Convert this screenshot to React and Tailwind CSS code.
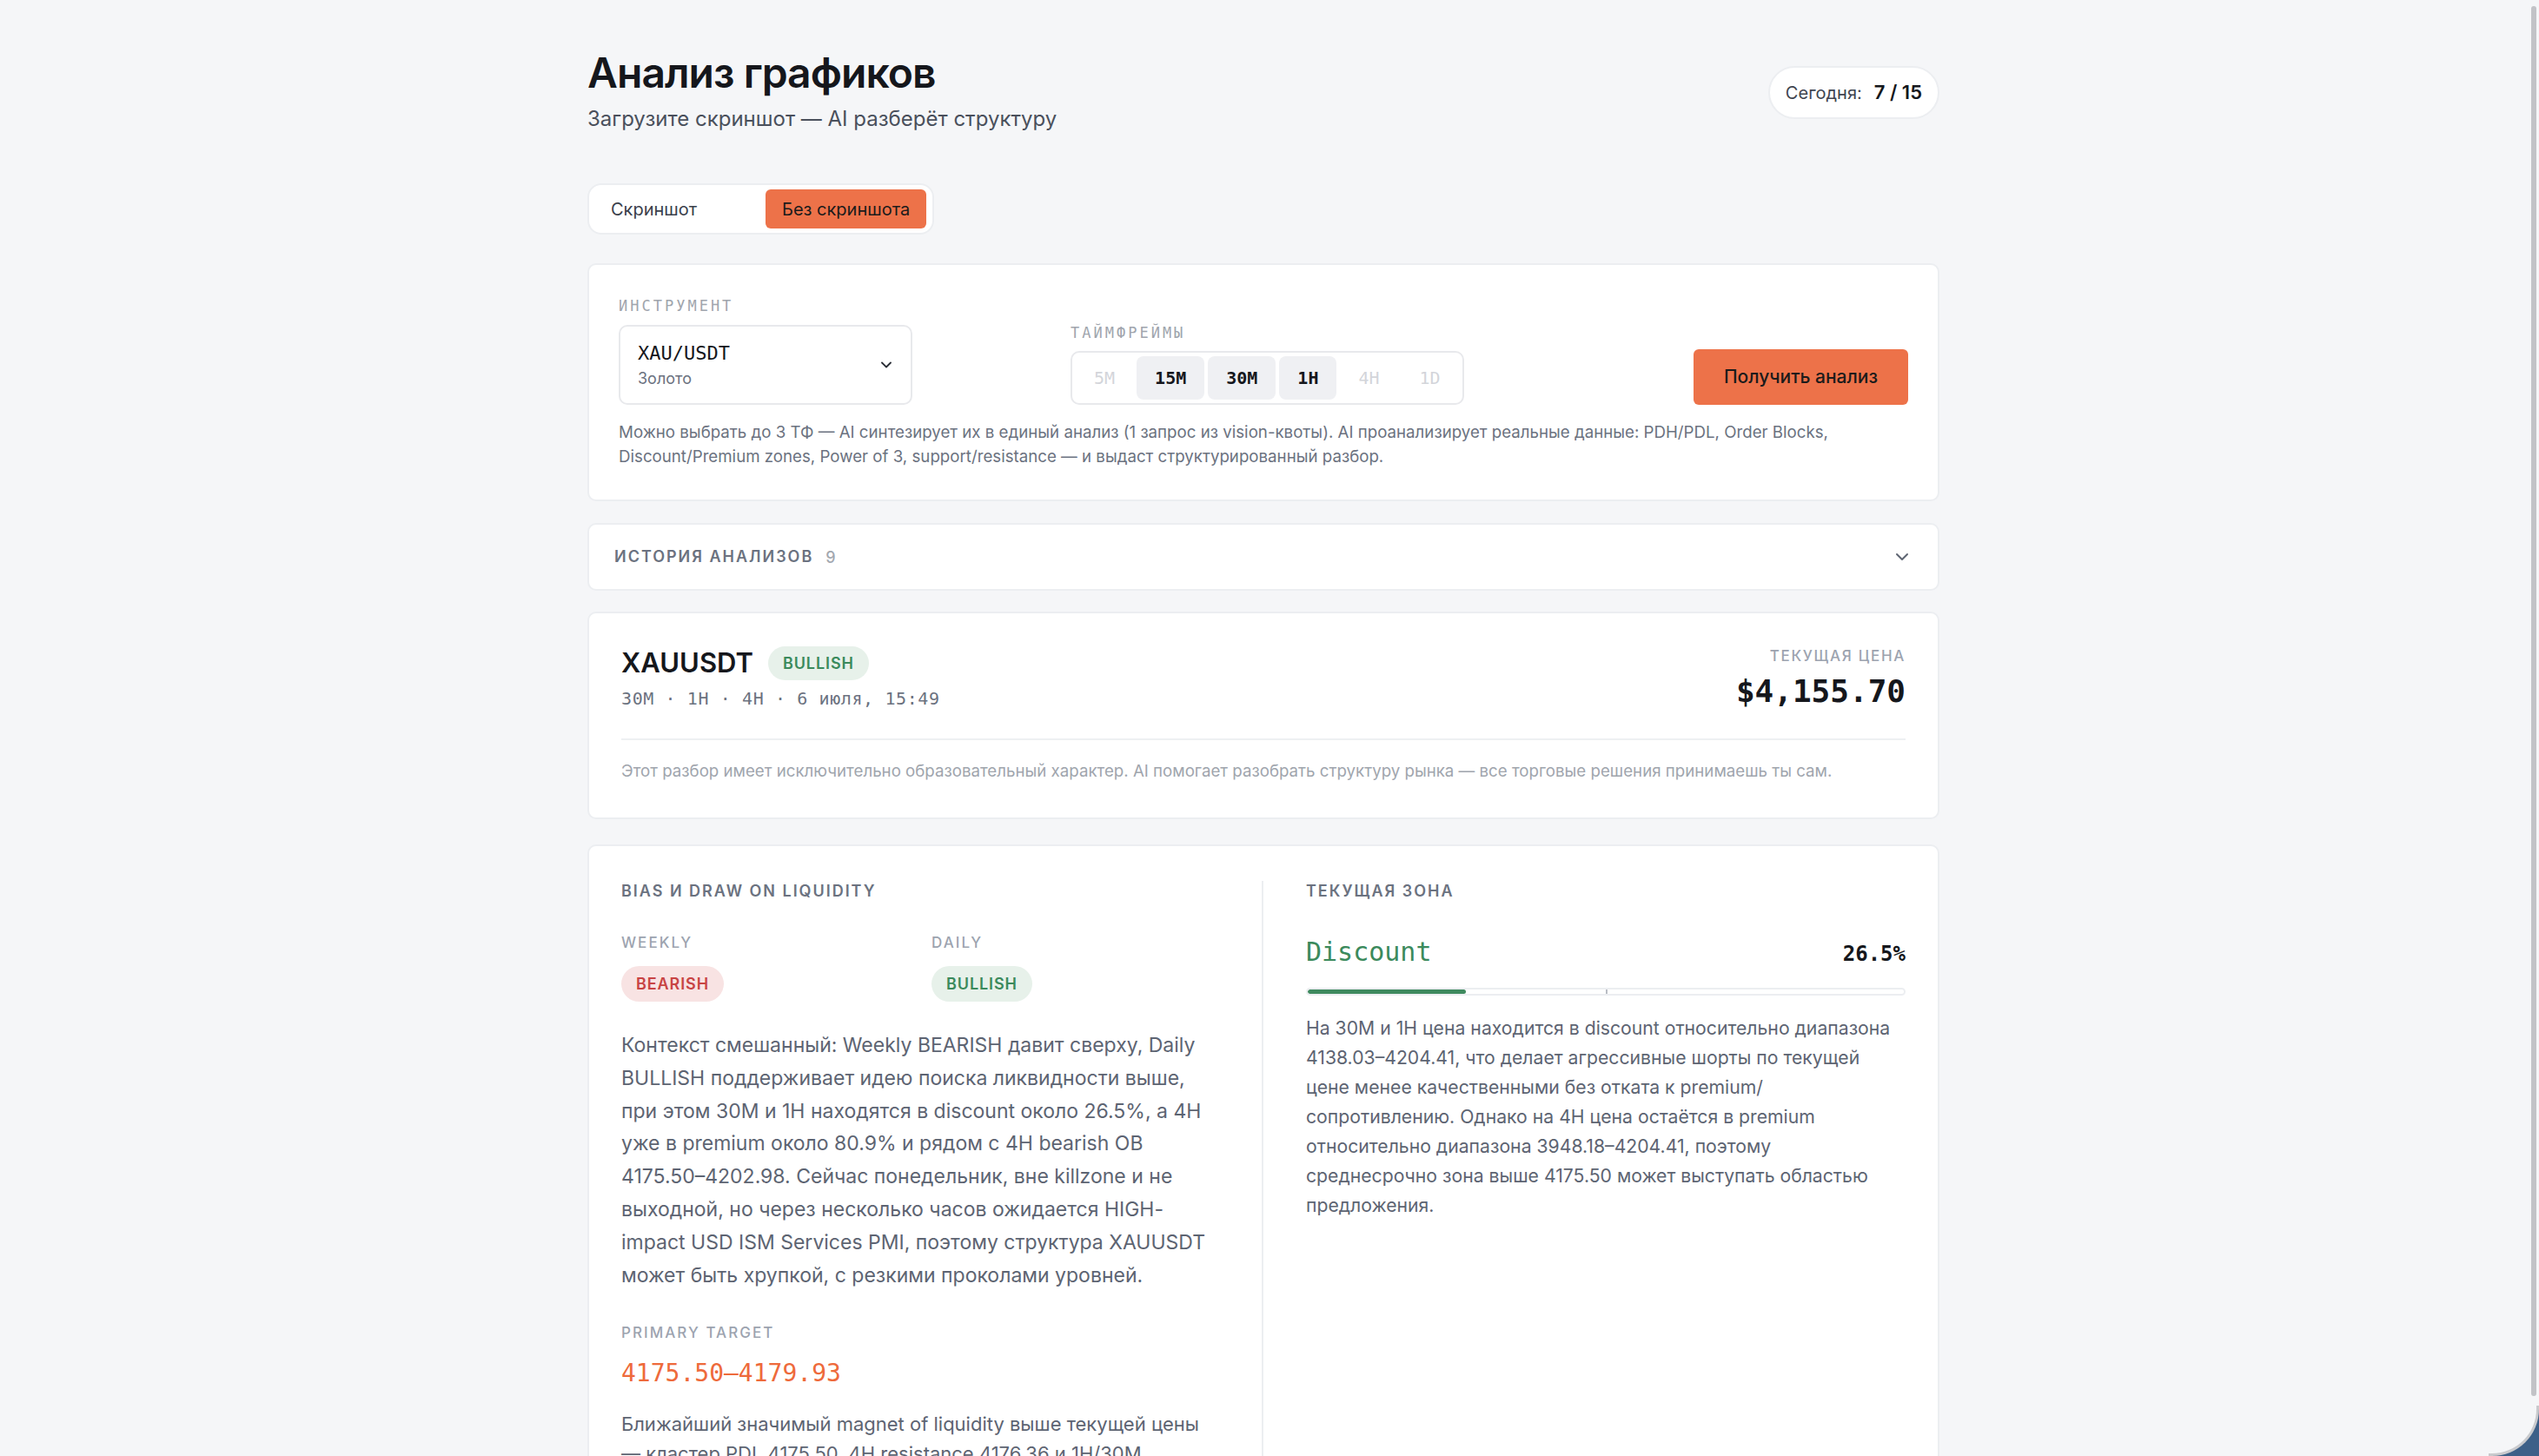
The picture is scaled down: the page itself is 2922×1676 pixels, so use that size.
import React from 'react';
import { ChevronDown } from 'lucide-react';

const frames = [
  { id: '5M', on: false },
  { id: '15M', on: true },
  { id: '30M', on: true },
  { id: '1H', on: true },
  { id: '4H', on: false },
  { id: '1D', on: false },
];

function MonoLabel({ children }) {
  return (
    <div className="font-['DejaVu_Sans_Mono',monospace] text-[17px] leading-[24px] tracking-[3px] text-[#a0a5ad] uppercase">
      {children}
    </div>
  );
}

function SectionLabel({ children }) {
  return (
    <div className="text-[18px] leading-[24px] font-semibold tracking-[0.11em] text-[#6b7280] uppercase">{children}</div>
  );
}

function SmallLabel({ children }) {
  return (
    <div className="text-[17px] leading-[24px] font-medium tracking-[0.12em] text-[#9ca3af] uppercase">{children}</div>
  );
}

function Bias({ kind }) {
  const bull = kind === 'BULLISH';
  return (
    <span
      className={
        bull
          ? 'inline-flex h-[41px] items-center rounded-full bg-[#e7f1ea] px-[17px] text-[18px] font-semibold tracking-[0.05em] text-[#3b8a5c]'
          : 'inline-flex h-[41px] items-center rounded-full bg-[#f8e3e3] px-[17px] text-[18px] font-semibold tracking-[0.05em] text-[#c84444]'
      }
    >
      {kind}
    </span>
  );
}

function Header() {
  return (
    <div className="flex items-start justify-between">
      <div>
        <h1 className="text-[48px] leading-[60px] font-semibold tracking-[-0.02em] text-[#15171c]">Анализ графиков</h1>
        <p className="mt-[7px] text-[24px] leading-[32px] text-[#4a505c]">Загрузите скриншот — AI разберёт структуру</p>
      </div>
      <div className="mt-[22px] flex h-[61px] items-center gap-[14px] rounded-full border-2 border-[#eceef1] bg-white px-[18px]">
        <span className="text-[20px] text-[#3f4550]">Сегодня:</span>
        <span className="text-[22px] font-semibold text-[#15171c]">7 / 15</span>
      </div>
    </div>
  );
}

function ModeToggle() {
  return (
    <div className="mt-[58px] flex w-fit gap-[6px] rounded-[16px] border-2 border-[#eceef1] bg-white px-[7px] py-[5px]">
      <button className="h-[45px] w-[190px] rounded-[6px] px-[18px] text-left text-[20px] text-[#3a404b]">Скриншот</button>
      <button className="h-[45px] rounded-[6px] bg-[#ed7249] px-[19px] text-[20px] text-[#1b1b1b]">Без скриншота</button>
    </div>
  );
}

function RequestCard() {
  return (
    <section className="mt-[33px] rounded-[10px] border-2 border-[#eceef1] bg-white px-[34px] pt-[35px] pb-[35px]">
      <div className="flex items-end">
        <div className="w-[338px]">
          <MonoLabel>Инструмент</MonoLabel>
          <div className="mt-[10px] flex h-[92px] items-center justify-between rounded-[10px] border-2 border-[#e8e9ec] pr-[18px] pl-[20px]">
            <div>
              <div className="font-['DejaVu_Sans_Mono',monospace] text-[22px] leading-[28px] text-[#15171c]">XAU/USDT</div>
              <div className="mt-[3px] text-[18px] leading-[24px] text-[#6b7280]">Золото</div>
            </div>
            <ChevronDown size={20} strokeWidth={2.2} className="text-[#2a2e36]" />
          </div>
        </div>
        <div className="ml-[182px]">
          <MonoLabel>Таймфреймы</MonoLabel>
          <div className="mt-[9px] flex gap-[4px] rounded-[10px] border-2 border-[#e8e9ec] p-[4px]">
            {frames.map((f) => (
              <span
                key={f.id}
                className={
                  f.on
                    ? "flex h-[50px] items-center rounded-[8px] bg-[#eff0f3] px-[21px] font-['DejaVu_Sans_Mono',monospace] text-[20px] font-semibold text-[#15171c]"
                    : "flex h-[50px] items-center rounded-[8px] px-[21px] font-['DejaVu_Sans_Mono',monospace] text-[20px] text-[#d3d5da]"
                }
              >
                {f.id}
              </span>
            ))}
          </div>
        </div>
        <button className="ml-auto h-[64px] w-[247px] rounded-[6px] bg-[#ed7249] text-[21px] font-medium text-[#1b1b1b]">
          Получить анализ
        </button>
      </div>
      <p className="mt-[18px] text-[18.7px] leading-[28px] text-[#6b7280]">
        Можно выбрать до 3 ТФ — AI синтезирует их в единый анализ (1 запрос из vision-квоты). AI проанализирует реальные данные: PDH/PDL, Order Blocks, Discount/Premium zones, Power of 3, support/resistance — и выдаст структурированный разбор.
      </p>
    </section>
  );
}

function HistoryBar() {
  return (
    <div className="mt-[25px] flex h-[78px] items-center justify-between rounded-[10px] border-2 border-[#eceef1] bg-white px-[29px]">
      <div className="flex items-center gap-[14px]">
        <SectionLabel>История анализов</SectionLabel>
        <span className="text-[18px] font-medium text-[#a3a8b0]">9</span>
      </div>
      <ChevronDown size={24} strokeWidth={2} className="text-[#5f6673]" />
    </div>
  );
}

function SummaryCard() {
  return (
    <section className="mt-[24px] rounded-[10px] border-2 border-[#eceef1] bg-white px-[37px] pt-[37px] pb-[40px]">
      <div className="flex items-start justify-between">
        <div>
          <div className="flex items-center gap-[17px]">
            <span className="text-[31px] leading-[40px] font-semibold text-[#15171c]">XAUUSDT</span>
            <span className="inline-flex h-[39px] items-center rounded-full bg-[#e7f1ea] px-[17px] text-[18px] font-semibold tracking-[0.05em] text-[#3b8a5c]">
              BULLISH
            </span>
          </div>
          <div className="mt-[7px] font-['DejaVu_Sans_Mono',monospace] text-[20px] leading-[28px] tracking-[0.6px] text-[#6b7280]">
            30M · 1H · 4H · 6 июля, 15:49
          </div>
        </div>
        <div className="text-right">
          <div className="text-[17px] leading-[24px] font-medium tracking-[0.1em] text-[#9ca3af]">ТЕКУЩАЯ ЦЕНА</div>
          <div className="mt-[7px] font-['DejaVu_Sans_Mono',monospace] text-[36px] leading-[44px] font-semibold text-[#15171c]">
            $4,155.70
          </div>
        </div>
      </div>
      <div className="mt-[32px] border-t-2 border-[#eef0f2] pt-[23px] text-[18.7px] leading-[26px] text-[#a0a5ad]">
        Этот разбор имеет исключительно образовательный характер. AI помогает разобрать структуру рынка — все торговые решения принимаешь ты сам.
      </div>
    </section>
  );
}

function DetailsCard() {
  return (
    <section className="mt-[29px] rounded-[10px] border-2 border-[#eceef1] bg-white px-[37px] pt-[40px] pb-[37px]">
      <div className="flex">
        <div className="w-[690px]">
          <SectionLabel>Bias и draw on liquidity</SectionLabel>
          <div className="mt-[35px] grid grid-cols-2 gap-[24px]">
            <div>
              <SmallLabel>Weekly</SmallLabel>
              <div className="mt-[15px]">
                <Bias kind="BEARISH" />
              </div>
            </div>
            <div>
              <SmallLabel>Daily</SmallLabel>
              <div className="mt-[15px]">
                <Bias kind="BULLISH" />
              </div>
            </div>
          </div>
          <p className="mt-[32px] text-[23px] leading-[37.8px] text-[#5d6472]">
            Контекст смешанный: Weekly BEARISH давит сверху, Daily BULLISH поддерживает идею поиска ликвидности выше, при этом 30M и 1H находятся в discount около 26.5%, а 4H уже в premium около 80.9% и рядом с 4H bearish OB 4175.50–4202.98. Сейчас понедельник, вне killzone и не выходной, но через несколько часов ожидается HIGH-impact USD ISM Services PMI, поэтому структура XAUUSDT может быть хрупкой, с резкими проколами уровней.
          </p>
          <div className="mt-[35px]">
            <SmallLabel>Primary target</SmallLabel>
          </div>
          <div className="mt-[17px] font-['DejaVu_Sans_Mono',monospace] text-[28px] leading-[36px] text-[#ee6a3b]">
            4175.50–4179.93
          </div>
          <p className="mt-[23px] text-[22px] leading-[34px] text-[#5d6472]">
            Ближайший значимый magnet of liquidity выше текущей цены — кластер PDL 4175.50, 4H resistance 4176.36 и 1H/30M premium, где вероятен первый sweep перед реакцией.
          </p>
        </div>
        <div className="ml-[47px] min-h-[900px] flex-1 border-l-2 border-[#eceef1] pl-[49px]">
          <SectionLabel>Текущая зона</SectionLabel>
          <div className="mt-[38px] flex items-baseline justify-between font-['DejaVu_Sans_Mono',monospace]">
            <span className="text-[30px] leading-[40px] text-[#3b8a5c]">Discount</span>
            <span className="text-[24px] font-semibold text-[#15171c]">26.5%</span>
          </div>
          <div className="relative mt-[21px] h-[9px] overflow-hidden rounded-full border-2 border-[#eceef1] bg-white">
            <div className="h-full rounded-full bg-[#3f8a5f]" style={{ width: '26.5%' }} />
            <div className="absolute top-0 left-1/2 h-full w-[2px] bg-[#b9bdc4]" />
          </div>
          <p className="mt-[20px] text-[21.2px] leading-[34px] text-[#5d6472]">
            На 30M и 1H цена находится в discount относительно диапазона 4138.03–4204.41, что делает агрессивные шорты по текущей цене менее качественными без отката к premium/сопротивлению. Однако на 4H цена остаётся в premium относительно диапазона 3948.18–4204.41, поэтому среднесрочно зона выше 4175.50 может выступать областью предложения.
          </p>
        </div>
      </div>
    </section>
  );
}

export default function App() {
  return (
    <div className="relative flex h-[1676px] overflow-hidden bg-[#f5f6f8] font-['Inter',sans-serif] text-[#15171c]">
      <main className="min-w-0 flex-1">
        <div className="mx-auto w-[1556px] pt-[54px]">
          <Header />
          <ModeToggle />
          <RequestCard />
          <HistoryBar />
          <SummaryCard />
          <DetailsCard />
        </div>
      </main>
      <div className="w-[14px] shrink-0">
        <div className="mt-[7px] ml-[5px] h-[1600px] w-[6px] rounded-full bg-[#c2c3c7]" />
      </div>
      <div className="absolute right-0 bottom-0 h-[58px] w-[58px] bg-[#3d6088]">
        <div className="h-full w-full rounded-br-[54px] border-r-[3px] border-b-[3px] border-[#c9cacd] bg-[#f5f6f8]" />
      </div>
    </div>
  );
}
